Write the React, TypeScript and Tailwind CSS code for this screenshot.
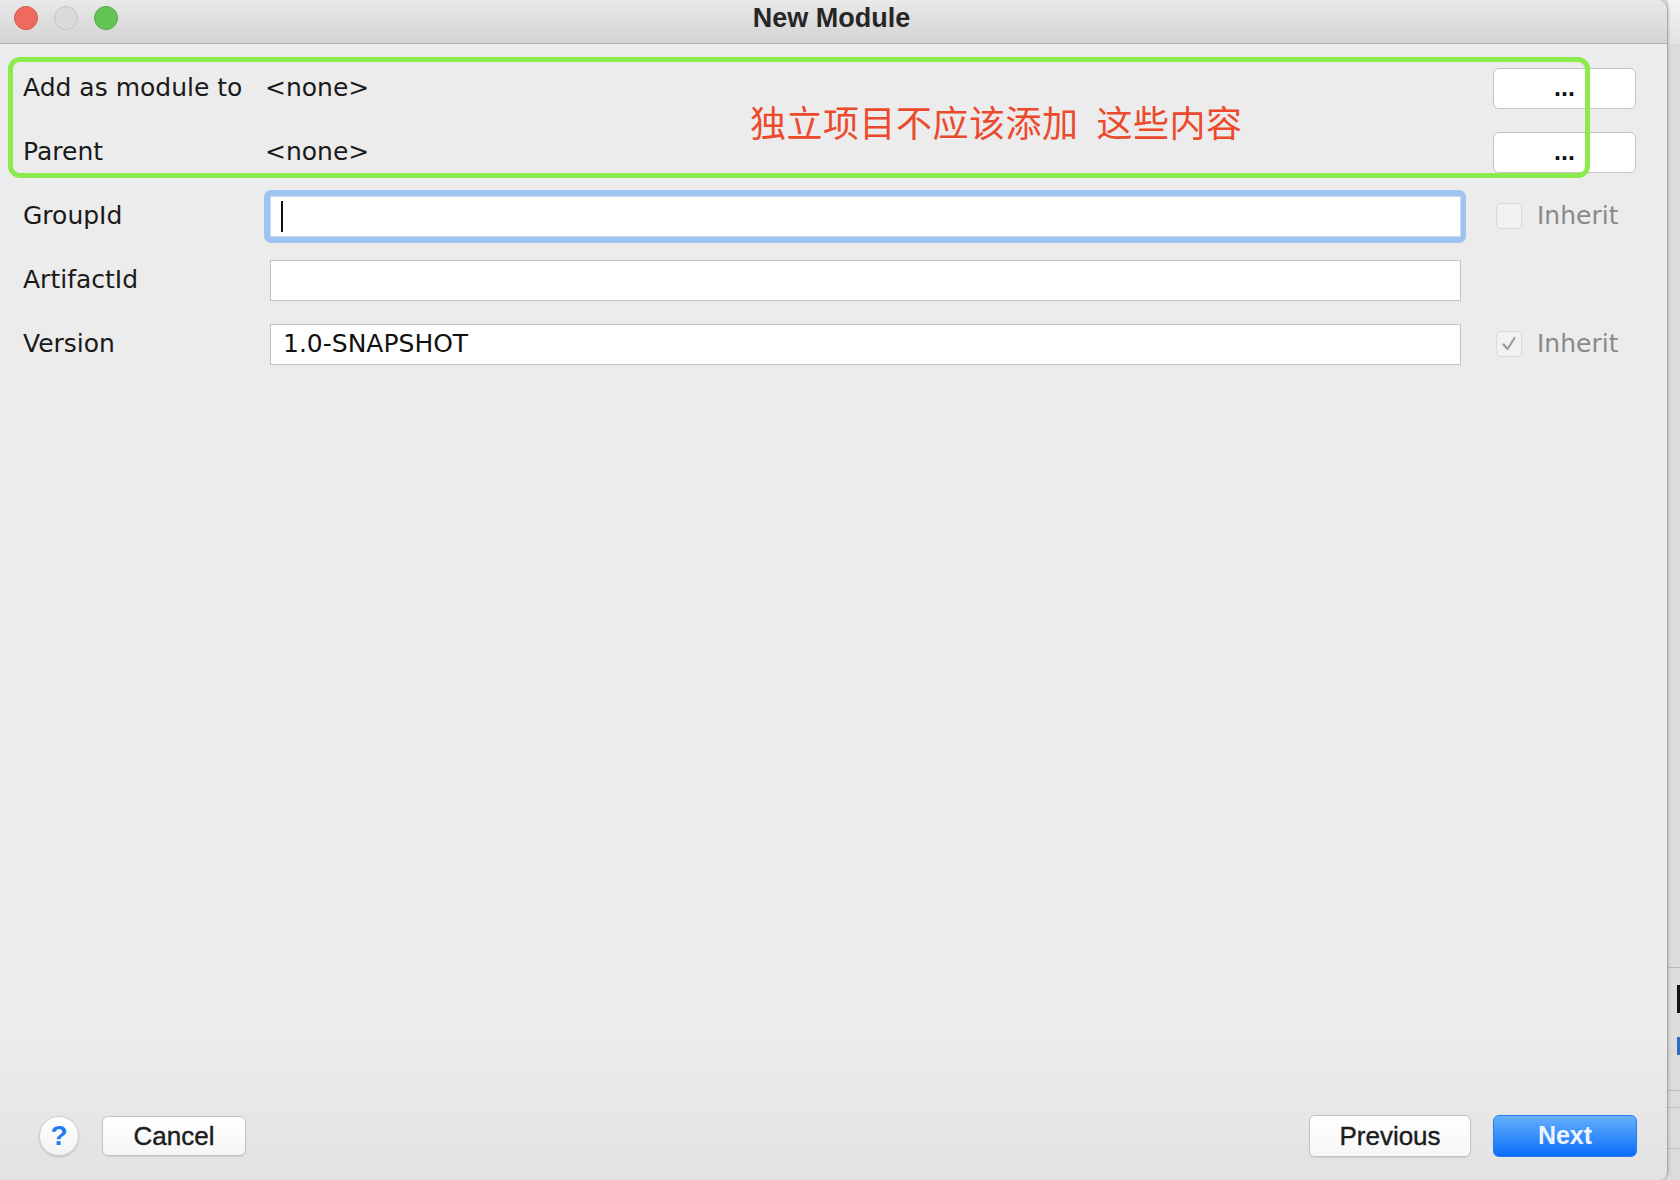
import React from "react";

const F = { fontFamily: '"DejaVu Sans", "Noto Sans", sans-serif' };

function Checkbox({ checked }: { checked?: boolean }) {
  return (
    <div className="w-[26px] h-[26px] rounded-[5px] border border-[#d9d9d9] bg-[#f1f1f1] flex items-center justify-center">
      {checked && (
        <svg width="18" height="18" viewBox="0 0 18 18">
          <polyline points="3.5,9.5 7.5,14 14.5,3" fill="none" stroke="#9c9c9c" strokeWidth="2.2" strokeLinecap="round" strokeLinejoin="round" />
        </svg>
      )}
    </div>
  );
}

function Inherit({ checked }: { checked?: boolean }) {
  return (
    <div className="w-[175px] pl-[35px] flex items-center gap-[15px]">
      <Checkbox checked={checked} />
      <span className="text-[25px] text-[#8a8a8a]" style={F}>Inherit</span>
    </div>
  );
}

function DotsButton() {
  return (
    <div className="w-[143px] h-[41px] rounded-[6px] border border-[#c5c5c5] bg-white flex items-center justify-center">
      <span className="text-[25px] font-bold text-[#111] [font-family:'Liberation_Sans',Arial,sans-serif]">...</span>
    </div>
  );
}

export default function App() {
  return (
    <div className="w-[1680px] h-[1180px] flex overflow-hidden bg-[#dcdcdc]">
      <div className="relative w-[1668px] h-[1180px] flex flex-col rounded-tr-[10px] rounded-br-[8px] border-r border-[#a9a9a9] bg-[linear-gradient(to_bottom,#ececec_88%,#e2e2e2)] shadow-[1px_0_3px_rgba(0,0,0,0.15)]">
        {/* Title bar */}
        <div className="relative h-[44px] shrink-0 rounded-tr-[10px] border-b border-[#b2b2b2] bg-[linear-gradient(to_bottom,#e9e9e9,#d3d3d3)] flex items-start">
          <div className="h-[36px] pl-[14px] flex items-center gap-[16px]">
            <div className="w-[24px] h-[24px] rounded-full bg-[#ee6a5f] border border-[#d5564b]" />
            <div className="w-[24px] h-[24px] rounded-full bg-[#dadada] border border-[#c3c3c3]" />
            <div className="w-[24px] h-[24px] rounded-full bg-[#62c554] border border-[#52ab45]" />
          </div>
          <div className="absolute left-0 right-0 top-0 h-[36px] flex items-center justify-center pointer-events-none">
            <span className="text-[27px] font-bold text-[#262626] [font-family:'Liberation_Sans',Arial,sans-serif] mr-[4px]">New Module</span>
          </div>
        </div>

        {/* Form */}
        <div className="flex flex-col pt-[12px] pl-[23px] pr-[31px] text-[#1a1a1a]" style={F}>
          <div className="h-[64px] flex items-center">
            <div className="w-[242px] text-[25px]">Add as module to</div>
            <div className="flex-1 text-[25px]">&lt;none&gt;</div>
            <DotsButton />
          </div>
          <div className="h-[64px] flex items-center">
            <div className="w-[242px] text-[25px]">Parent</div>
            <div className="flex-1 text-[25px]">&lt;none&gt;</div>
            <DotsButton />
          </div>
          <div className="h-[64px] flex items-center">
            <div className="w-[244px] text-[25px]">GroupId</div>
            <div className="flex-1 -ml-[3px] -mr-[5px] p-[6px] pr-[5px] rounded-[7px] bg-[#9ec4f2]">
              <div className="h-[41px] bg-white border border-[#c9d9ee] flex items-center pl-[10px]">
                <div className="w-[2px] h-[31px] bg-[#111]" />
              </div>
            </div>
            <Inherit />
          </div>
          <div className="h-[64px] flex items-center">
            <div className="w-[247px] text-[25px]">ArtifactId</div>
            <div className="flex-1 h-[41px] bg-white border border-[#c2c2c2]" />
            <div className="w-[175px]" />
          </div>
          <div className="h-[64px] flex items-center">
            <div className="w-[247px] text-[25px]">Version</div>
            <div className="flex-1 h-[41px] bg-white border border-[#c2c2c2] flex items-center pl-[12px] text-[25px] text-[#111]">1.0-SNAPSHOT</div>
            <Inherit checked />
          </div>
        </div>

        <div className="flex-1" />

        {/* Footer */}
        <div className="h-[88px] shrink-0 flex items-center pl-[39px] pr-[30px] [font-family:'Liberation_Sans',Arial,sans-serif]">
          <div className="w-[40px] h-[40px] rounded-full bg-[linear-gradient(to_bottom,#ffffff,#f3f3f3)] border border-[#cfcfcf] shadow-[0_1px_2px_rgba(0,0,0,0.18)] flex items-center justify-center">
            <span className="text-[28px] leading-none text-[#1c7df6] font-bold">?</span>
          </div>
          <div className="ml-[23px] w-[144px] h-[40px] rounded-[6px] border border-[#c3c3c3] bg-[linear-gradient(to_bottom,#ffffff,#f6f6f6)] shadow-[0_1px_1px_rgba(0,0,0,0.08)] flex items-center justify-center">
            <span className="text-[26px] text-[#1c1c1c] [-webkit-text-stroke:0.4px_#1c1c1c]">Cancel</span>
          </div>
          <div className="flex-1" />
          <div className="w-[162px] h-[42px] rounded-[6px] border border-[#c3c3c3] bg-[linear-gradient(to_bottom,#ffffff,#f6f6f6)] shadow-[0_1px_1px_rgba(0,0,0,0.08)] flex items-center justify-center">
            <span className="text-[26px] text-[#1c1c1c] [-webkit-text-stroke:0.4px_#1c1c1c]">Previous</span>
          </div>
          <div className="ml-[22px] w-[144px] h-[42px] rounded-[6px] border border-[#2a7bf0] bg-[linear-gradient(to_bottom,#65b0fe,#0a6df9)] flex items-center justify-center">
            <span className="text-[25px] font-bold text-[#eef4fc]">Next</span>
          </div>
        </div>

        {/* Annotations */}
        <div className="absolute left-[8px] top-[57px] w-[1582px] h-[121px] border-[5px] border-[#8ceb4c] rounded-[12px] pointer-events-none" />
        <div className="absolute left-[750px] top-[103px] text-[36px] leading-none tracking-[0.5px] text-[#ec4a2c] whitespace-nowrap [font-family:'Noto_Sans_CJK_SC','Noto_Sans',sans-serif]">
          独立项目不应该添加<span className="ml-[18px]">这些内容</span>
        </div>
      </div>

      {/* Background strip */}
      <div className="flex-1 flex flex-col">
        <div className="h-[44px] bg-[linear-gradient(to_bottom,#f3f3f3,#e3e3e3)]" />
        <div className="h-[923px] bg-[#dcdcdc]" />
        <div className="h-[1px] bg-[#b9b9b9]" />
        <div className="h-[17px] bg-[#dcdcdc]" />
        <div className="h-[28px] bg-[#dcdcdc] flex justify-end"><div className="w-[3px] bg-[#111]" /></div>
        <div className="h-[24px] bg-[#dcdcdc]" />
        <div className="h-[18px] bg-[#dcdcdc] flex justify-end"><div className="w-[3px] bg-[#2f6cc0]" /></div>
        <div className="h-[35px] bg-[#dcdcdc]" />
        <div className="h-[1px] bg-[#bdbdbd]" />
        <div className="h-[16px] bg-[#dcdcdc]" />
        <div className="h-[1px] bg-[#c2c2c2]" />
        <div className="h-[40px] bg-[#dcdcdc]" />
        <div className="h-[1px] bg-[#c2c2c2]" />
        <div className="flex-1 bg-[#dcdcdc]" />
      </div>
    </div>
  );
}
